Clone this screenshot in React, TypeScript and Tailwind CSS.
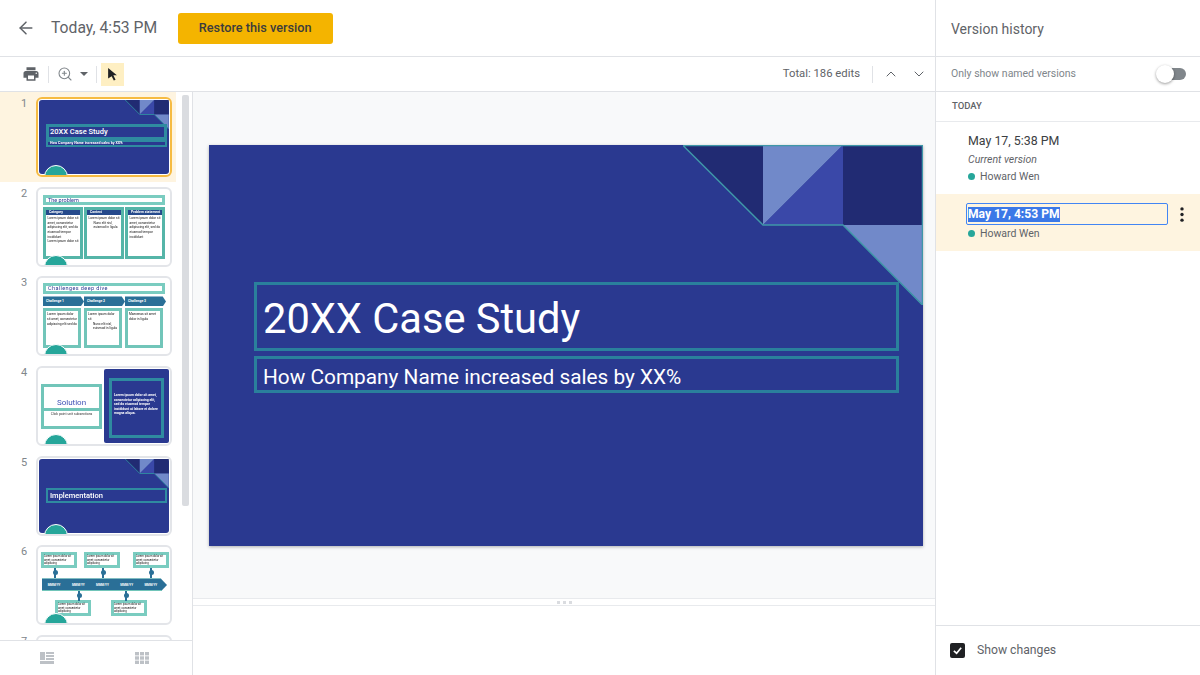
import { ArrowLeft, ChevronDown, ChevronUp, ZoomIn } from "lucide-react";
import { MdPrint } from "react-icons/md";

const lorem = "Lorem ipsum dolor sit amet, consectetur adipiscing elit, sed do eiusmod tempor incididunt";

function Blob() {
  return <div className="absolute left-[6px] bottom-[-6px] h-[16px] w-[24px] rounded-t-full border border-white bg-[#26a69a]" />;
}

function Corner() {
  return (
    <svg viewBox="0 0 240 160" className="absolute right-0 top-0 h-[29px] w-[44px]">
      <polygon points="0,0 80,0 80,80" fill="#212b73" />
      <polygon points="80,0 160,0 80,80" fill="#7189c9" />
      <polygon points="160,0 160,80 80,80" fill="#3a48a8" />
      <rect x="160" y="0" width="80" height="80" fill="#212b73" />
      <polygon points="160,80 240,80 240,160" fill="#7189c9" />
      <path d="M0 0 L80 80 H160 L240 160" fill="none" stroke="#2f8ba0" strokeWidth="5" />
    </svg>
  );
}

function ThumbFrame({ children, selected }: { children: React.ReactNode; selected?: boolean }) {
  return (
    <div
      className={
        selected
          ? "relative h-[80px] w-[136px] overflow-hidden rounded-[6px] border-2 border-[#f6bb42] bg-white"
          : "relative h-[80px] w-[136px] overflow-hidden rounded-[6px] border-2 border-[#e3e5e9] bg-white"
      }
    >
      <div className="h-full blur-[0.35px]">
        {children}
        <Blob />
      </div>
    </div>
  );
}

function DarkThumb({ children }: { children: React.ReactNode }) {
  return (
    <div className="absolute inset-[1px] rounded-[3px] bg-[#2a3990]">
      <Corner />
      {children}
    </div>
  );
}

function Lines({ text = lorem }: { text?: string }) {
  return <p className="text-[3.2px] leading-[4.6px] text-[#111]">{text}</p>;
}

function Col({ head, arrow, children }: { head: string; arrow?: boolean; children: React.ReactNode }) {
  if (arrow) {
    return (
      <div className="flex-1">
        <div className="mr-[-3px] flex h-[10px] items-center bg-[#2a6f97] pl-[3px] text-[3.4px] font-bold text-white [clip-path:polygon(0_0,92%_0,100%_50%,92%_100%,0_100%)]">
          {head}
        </div>
        <div className="mt-[2px] h-[40px] border-[3px] border-[#71c5b9] bg-white p-[1px]">{children}</div>
      </div>
    );
  }
  return (
    <div className="flex h-[52px] flex-1 flex-col border-[3px] border-[#55b5a8] bg-white">
      <div className="bg-[#264a8c] pl-[3px] text-[3.4px] font-bold leading-[5px] text-white">{head}</div>
      <div className="p-[1.5px]">{children}</div>
    </div>
  );
}

function Thumb2() {
  return (
    <ThumbFrame>
      <div className="flex flex-col gap-[2px] px-[5px] pt-[6px]">
        <div className="h-[10px] border-[3px] border-[#7accc0] pl-[2px] text-[5.5px] leading-[5px] text-[#2a3990]">The problem</div>
        <div className="flex gap-[1px]">
          <Col head="Category"><Lines /><Lines text="Lorem ipsum dolor sit" /></Col>
          <Col head="Context"><Lines text="Lorem ipsum dolor sit" /><div className="pl-[5px]"><Lines text="Nunc elit nisl, euismod in ligula" /></div></Col>
          <Col head="Problem statement"><Lines /></Col>
        </div>
      </div>
    </ThumbFrame>
  );
}

function Thumb3() {
  return (
    <ThumbFrame>
      <div className="flex flex-col gap-[2px] px-[5px] pt-[5px]">
        <div className="h-[11px] border-[3px] border-[#7accc0] pl-[2px] text-[5.5px] leading-[5px] tracking-[0.4px] text-[#2a3990]">Challenges deep dive</div>
        <div className="flex gap-[3px] pr-[2px]">
          <Col head="Challenge 1" arrow><Lines text="Lorem ipsum dolor sit amet, consectetur adipiscing elit sed do" /></Col>
          <Col head="Challenge 2" arrow><Lines text="Lorem ipsum dolor sit" /><div className="pl-[5px]"><Lines text="Nunc elit nisl, euismod in ligula" /></div></Col>
          <Col head="Challenge 3" arrow><Lines text="Maecenas sit amet dolor in ligula" /></Col>
        </div>
      </div>
    </ThumbFrame>
  );
}

function Thumb4() {
  return (
    <ThumbFrame>
      <div className="absolute left-[3px] top-[16px] h-[45px] w-[61px] border-[3px] border-[#71c5b9] bg-white text-center">
        <div className="mt-[11px] text-[8px] leading-[9px] text-[#3f51b5]">Solution</div>
        <div className="mt-[1px] h-[3px] bg-[#71c5b9]" />
        <div className="text-[3.4px] leading-[6px] text-[#333]">Click point unit subsections</div>
      </div>
      <div className="absolute bottom-[1px] right-[1px] top-[1px] w-[65px] rounded-[2px] bg-[#2a3990] p-[5px] pt-[9px]">
        <div className="h-full border-[3px] border-[#2f8ba0] p-[2px] pt-[12px] text-[3.4px] font-bold leading-[4.6px] text-white">
          Lorem ipsum dolor sit amet, consectetur adipiscing elit, sed do eiusmod tempor incididunt ut labore et dolore magna aliqua.
        </div>
      </div>
    </ThumbFrame>
  );
}

function Note() {
  return (
    <div className="h-[16px] w-[36px] border-[3px] border-[#7accc0] bg-white text-[2.8px] leading-[3.4px] text-[#111]">
      Lorem ipsum dolor sit amet, consectetur adipiscing
    </div>
  );
}

function Stem({ className }: { className: string }) {
  return (
    <div className={"absolute h-[10px] w-[2px] bg-[#2a6f97] " + className}>
      <div className="ml-[-1.5px] mt-[2px] h-[5px] w-[5px] rounded-full bg-[#2a6f97]" />
    </div>
  );
}

function Thumb6() {
  return (
    <ThumbFrame>
      <div className="absolute left-[3px] top-[5px]"><Note /></div>
      <div className="absolute left-[46px] top-[5px]"><Note /></div>
      <div className="absolute left-[95px] top-[5px]"><Note /></div>
      <div className="absolute left-[17px] top-[53px]"><Note /></div>
      <div className="absolute left-[73px] top-[53px]"><Note /></div>
      <Stem className="left-[16px] top-[21px]" />
      <Stem className="left-[64px] top-[21px]" />
      <Stem className="left-[112px] top-[21px]" />
      <Stem className="left-[40px] top-[44px]" />
      <Stem className="left-[87px] top-[44px]" />
      <div className="absolute left-[4px] top-[31px] flex h-[13px] w-[125px] items-center justify-around border-y border-[#71c5b9] bg-[#2a6f97] pr-[4px] text-[3px] font-bold text-white [clip-path:polygon(0_0,95%_0,100%_50%,95%_100%,0_100%)]">
        <span>MMM/YY</span><span>MMM/YY</span><span>MMM/YY</span><span>MMM/YY</span><span>MMM/YY</span>
      </div>
    </ThumbFrame>
  );
}

const thumbs = [
  {
    n: 1,
    el: (
      <ThumbFrame selected>
        <DarkThumb>
          <div className="absolute left-[7px] right-[2px] top-[24px] h-[16px] border-[3px] border-[#2f8ba0] pl-[1px] text-[7.5px] font-medium leading-[10px] text-white">20XX Case Study</div>
          <div className="absolute left-[7px] right-[2px] top-[40px] h-[7px] border-[2px] border-[#2f8ba0] pl-[2px] text-[3.6px] font-bold leading-[3px] text-white">How Company Name increased sales by XX%</div>
        </DarkThumb>
      </ThumbFrame>
    ),
  },
  { n: 2, el: <Thumb2 /> },
  { n: 3, el: <Thumb3 /> },
  { n: 4, el: <Thumb4 /> },
  {
    n: 5,
    el: (
      <ThumbFrame>
        <DarkThumb>
          <div className="absolute left-[7px] right-[2px] top-[29px] h-[15px] border-[2px] border-[#2f8ba0] pl-[2px] text-[7.5px] font-medium leading-[11px] text-white">Implementation</div>
        </DarkThumb>
      </ThumbFrame>
    ),
  },
  { n: 6, el: <Thumb6 /> },
  { n: 7, el: <ThumbFrame><span /></ThumbFrame> },
];

function Filmstrip() {
  return (
    <div className="relative flex w-[193px] shrink-0 flex-col border-r border-[#e0e2e6]">
      <div className="h-[548px] overflow-hidden">
        {thumbs.map((t) => (
          <div
            key={t.n}
            className={
              t.n === 1
                ? "mr-[16px] flex h-[89.7px] gap-[12px] bg-[#fef4e0] pl-[21px] pt-[5px]"
                : "mr-[16px] flex h-[89.7px] gap-[12px] pl-[21px] pt-[5px]"
            }
          >
            <span className="w-[3px] text-[11px] leading-[13px] text-[#80868b]">{t.n}</span>
            <div>{t.el}</div>
          </div>
        ))}
      </div>
      <div className="absolute left-[182px] top-[3px] h-[411px] w-[7px] rounded-[2px] bg-[#dadce0]" />
      <div className="flex h-[35px] items-center justify-around border-t border-[#e0e2e6] pr-[3px]">
        <svg viewBox="0 0 14 12" className="h-[12px] w-[14px]" fill="#bdc1c6">
          <rect x="0" y="0" width="5" height="8" />
          <rect x="6" y="0" width="8" height="2" />
          <rect x="6" y="3" width="8" height="2" />
          <rect x="6" y="6" width="8" height="2" />
          <rect x="0" y="9" width="14" height="3" />
        </svg>
        <svg viewBox="0 0 14 12" className="h-[12px] w-[14px]" fill="#bdc1c6">
          <rect x="0" y="0" width="4" height="3.4" /><rect x="5" y="0" width="4" height="3.4" /><rect x="10" y="0" width="4" height="3.4" />
          <rect x="0" y="4.3" width="4" height="3.4" /><rect x="5" y="4.3" width="4" height="3.4" /><rect x="10" y="4.3" width="4" height="3.4" />
          <rect x="0" y="8.6" width="4" height="3.4" /><rect x="5" y="8.6" width="4" height="3.4" /><rect x="10" y="8.6" width="4" height="3.4" />
        </svg>
      </div>
    </div>
  );
}

function Slide() {
  return (
    <div className="relative h-[401px] w-[714px] bg-[#2a3990] shadow-[0_1px_3px_rgba(60,64,67,0.4)]">
      <svg viewBox="0 0 240 160" className="absolute right-0 top-0 h-[160px] w-[240px]">
        <polygon points="0,0 80,0 80,80" fill="#212b73" />
        <polygon points="80,0 160,0 80,80" fill="#7189c9" />
        <polygon points="160,0 160,80 80,80" fill="#3a48a8" />
        <rect x="160" y="0" width="80" height="80" fill="#212b73" />
        <polygon points="160,80 240,80 240,160" fill="#7189c9" />
        <path d="M0 0.5 H239.5 V160 L160 80 H80 L0 0.5" fill="none" stroke="#3f97a8" strokeWidth="1.5" />
      </svg>
      <div className="absolute left-[45px] top-[137px] h-[69px] w-[645px] border-[3px] border-[#2a809c] pl-[6px] text-[41.6px] leading-[68px] text-white">
        20XX Case Study
      </div>
      <div className="absolute left-[45px] top-[211px] h-[37px] w-[645px] border-[3px] border-[#2a809c] pl-[6px] text-[20.8px] leading-[36px] text-white">
        How Company Name increased sales by XX%
      </div>
    </div>
  );
}

function SidePanel() {
  return (
    <aside className="flex w-[265px] shrink-0 flex-col border-l border-[#e0e2e6] bg-white">
      <div className="flex h-[57px] shrink-0 items-center border-b border-[#e0e2e6] pl-[15px] pt-[2px] text-[14px] text-[#5f6368]">Version history</div>
      <div className="flex h-[35px] shrink-0 items-center justify-between border-b border-[#e0e2e6] pl-[15px] pr-[14px]">
        <span className="text-[10.5px] text-[#80868b]">Only show named versions</span>
        <div className="relative h-[12px] w-[29px] rounded-full bg-[#80868b]">
          <div className="absolute left-[-1px] top-[-3px] h-[18px] w-[18px] rounded-full bg-white shadow-[0_1px_3px_rgba(0,0,0,0.4)]" />
        </div>
      </div>
      <div className="flex h-[30px] shrink-0 items-center border-b border-[#e8eaed] pl-[16px] text-[9.5px] font-medium text-[#5f6368]">TODAY</div>
      <div className="h-[72px] shrink-0 pl-[32px] pt-[10px]">
        <div className="text-[12.4px] leading-[17px] text-[#3c4043]">May 17, 5:38 PM</div>
        <div className="mt-[3px] text-[10.5px] italic leading-[15px] text-[#5f6368]">Current version</div>
        <div className="mt-[2px] flex items-center gap-[5px] text-[10.5px] leading-[15px] text-[#5f6368]">
          <span className="h-[7px] w-[7px] rounded-full bg-[#26a69a]" />
          Howard Wen
        </div>
      </div>
      <div className="h-[57px] shrink-0 bg-[#fef4e0] pl-[30px] pr-[12px] pt-[9px]">
        <div className="flex items-center justify-between">
          <div className="flex h-[22px] w-[202px] items-center rounded-[2px] border border-[#4285f4] pl-[1px]">
            <span className="bg-[#3b78e7] text-[12.1px] font-bold leading-[15px] text-white">May 17, 4:53 PM</span>
          </div>
          <svg viewBox="0 0 4 16" className="mr-[4px] h-[15px] w-[4px]" fill="#202124">
            <circle cx="2" cy="2" r="1.8" /><circle cx="2" cy="8" r="1.8" /><circle cx="2" cy="14" r="1.8" />
          </svg>
        </div>
        <div className="ml-[2px] mt-[1px] flex items-center gap-[5px] text-[10.5px] leading-[15px] text-[#5f6368]">
          <span className="h-[7px] w-[7px] rounded-full bg-[#26a69a]" />
          Howard Wen
        </div>
      </div>
      <div className="flex-1" />
      <div className="flex h-[50px] shrink-0 items-center gap-[12px] border-t border-[#e0e2e6] pl-[14px]">
        <div className="flex h-[15px] w-[15px] items-center justify-center rounded-[2px] bg-[#202124]">
          <svg viewBox="0 0 12 12" className="h-[11px] w-[11px]" fill="none" stroke="#fff" strokeWidth="1.8">
            <path d="M2 6.5 L5 9 L10 3" />
          </svg>
        </div>
        <span className="text-[12.2px] text-[#5f6368]">Show changes</span>
      </div>
    </aside>
  );
}

export default function App() {
  return (
    <div className="flex h-[675px] w-[1200px] overflow-hidden bg-white font-['Roboto',sans-serif]">
      <main className="flex min-w-0 flex-1 flex-col">
        <header className="flex h-[57px] shrink-0 items-center border-b border-[#e0e2e6] pl-[16px]">
          <ArrowLeft className="h-[20px] w-[20px] text-[#5f6368]" strokeWidth={1.8} />
          <h1 className="ml-[15px] text-[15.7px] text-[#5f6368]">Today, 4:53 PM</h1>
          <button className="ml-[21px] h-[31px] w-[155px] rounded-[3px] bg-[#f4b400] pr-[1px] text-[12.7px] font-medium text-[#3c3c3c]">Restore this version</button>
        </header>
        <div className="flex h-[35px] shrink-0 items-center border-b border-[#e0e2e6] pl-[22px] pr-[8px]">
          <MdPrint className="h-[18px] w-[18px] text-[#5f6368]" />
          <div className="ml-[8px] mr-[7px] h-[17px] w-px bg-[#e0e2e6]" />
          <ZoomIn className="ml-[1px] h-[16px] w-[16px] text-[#80868b]" strokeWidth={1.6} />
          <div className="ml-[7px] h-0 w-0 border-x-[4px] border-t-[4px] border-x-transparent border-t-[#5f6368]" />
          <div className="ml-[8px] h-[17px] w-px bg-[#e0e2e6]" />
          <div className="ml-[4px] flex h-[23px] w-[23px] items-center justify-center bg-[#feefc3]">
            <svg viewBox="0 0 12 16" className="h-[14px] w-[11px]" fill="#202124">
              <path d="M1 1 L11 9.5 H7 L9.5 14.5 L7.5 15.5 L5 10.5 L1 13 Z" />
            </svg>
          </div>
          <div className="flex-1" />
          <span className="text-[11.3px] text-[#5f6368]">Total: 186 edits</span>
          <div className="ml-[12px] h-[17px] w-px bg-[#e0e2e6]" />
          <ChevronUp className="ml-[10px] h-[16px] w-[16px] text-[#5f6368]" strokeWidth={1.5} />
          <ChevronDown className="ml-[12px] h-[16px] w-[16px] text-[#5f6368]" strokeWidth={1.5} />
        </div>
        <div className="flex min-h-0 flex-1">
          <Filmstrip />
          <div className="flex min-w-0 flex-1 flex-col">
            <div className="flex-1 bg-[#f8f9fa] pl-[16px] pt-[53px]">
              <Slide />
            </div>
            <div className="flex h-[8px] shrink-0 items-center justify-center gap-[3px] border-y border-[#e8eaed] bg-white">
              <span className="h-[3px] w-[3px] bg-[#dadce0]" />
              <span className="h-[3px] w-[3px] bg-[#dadce0]" />
              <span className="h-[3px] w-[3px] bg-[#dadce0]" />
            </div>
            <div className="h-[69px] shrink-0 bg-white" />
          </div>
        </div>
      </main>
      <SidePanel />
    </div>
  );
}
